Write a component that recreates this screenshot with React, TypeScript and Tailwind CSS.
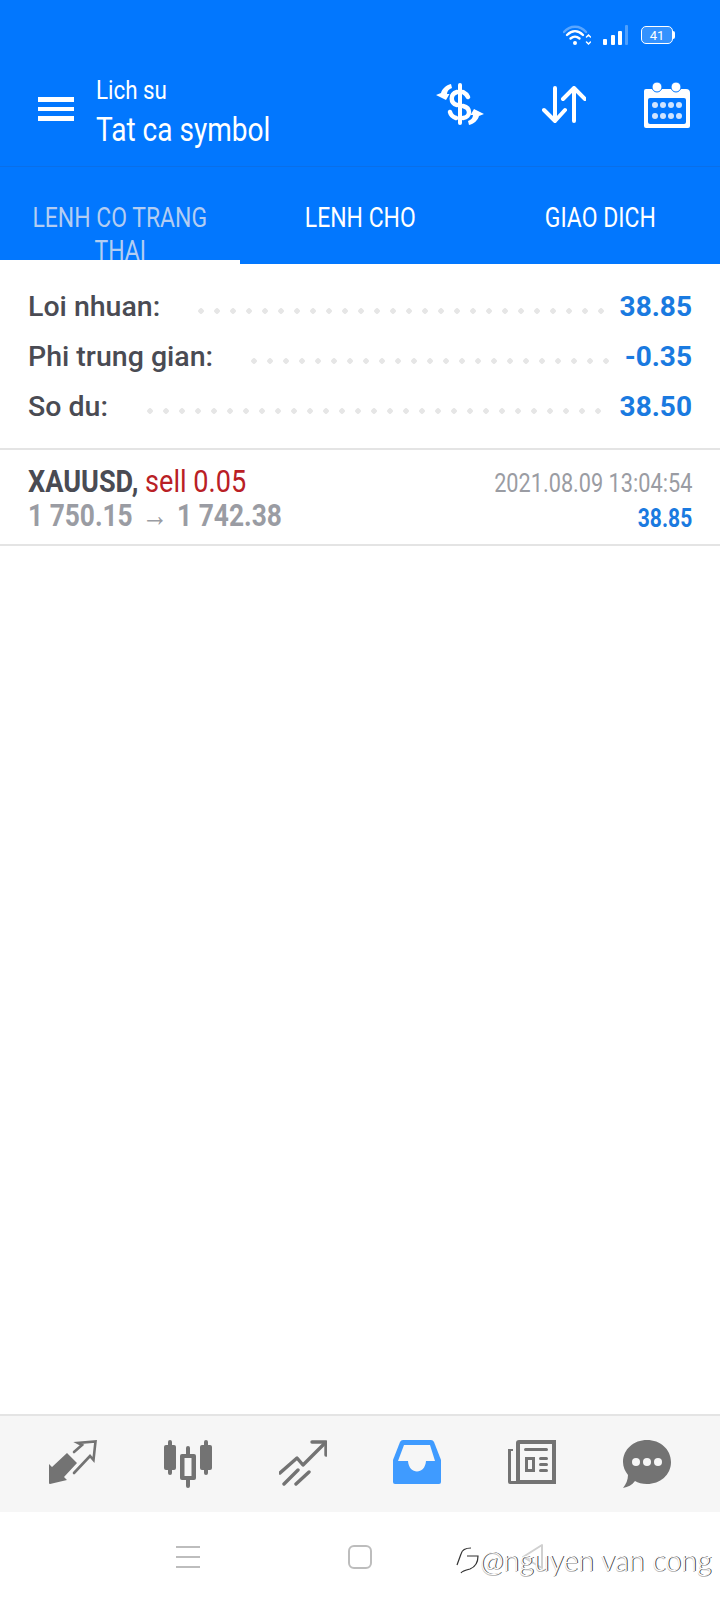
const tabs = [
  { id: "positions", lines: ["LENH CO TRANG", "THAI"], active: true },
  { id: "orders", lines: ["LENH CHO"], active: false },
  { id: "deals", lines: ["GIAO DICH"], active: false },
]

// dots tile is 16px, so the widths here are multiples of 16
const summary = [
  { label: "Loi nhuan:", value: "38.85", labelWidth: "w-[165px]", dotsWidth: "w-[416px]" },
  { label: "Phi trung gian:", value: "-0.35", labelWidth: "w-[218px]", dotsWidth: "w-[368px]" },
  { label: "So du:", value: "38.50", labelWidth: "w-[114px]", dotsWidth: "w-[464px]" },
]

function Condensed({ children, right, center, className = "scale-x-[0.86]" }: { children: React.ReactNode; right?: boolean; center?: boolean; className?: string }) {
  const origin = right ? "origin-right" : center ? "origin-center" : "origin-left"
  return <span className={`inline-block whitespace-nowrap ${origin} ${className}`}>{children}</span>
}

function StatusIcons() {
  return (
    <div className="flex items-center justify-end h-[70px] pr-[45px] gap-[12px]">
      <svg width="28" height="22" viewBox="0 0 28 22" fill="none" strokeLinecap="round">
        <path d="M1 8 C7 1 17 1 23 8" stroke="#ffffff" strokeOpacity="0.35" strokeWidth="2.4" />
        <path d="M4 11 C9 6 15 6 20 11" stroke="#ffffff" strokeWidth="2.4" />
        <path d="M7.5 14.5 C10.5 12 13.5 12 16.5 14.5" stroke="#ffffff" strokeWidth="2.4" />
        <circle cx="12" cy="19" r="2" fill="#ffffff" />
        <path d="M23.5 13 L25.5 11 L27.5 13 M23.5 18 L25.5 20 L27.5 18" stroke="#ffffff" strokeWidth="1.5" />
      </svg>
      <svg width="26" height="21" viewBox="0 0 26 21" fill="#ffffff">
        <rect x="0" y="14" width="4" height="6" rx="1" />
        <rect x="8" y="10" width="4" height="10" rx="1" />
        <rect x="15" y="6" width="4" height="14" rx="1" />
        <rect x="22" y="0" width="3" height="20" rx="1" fillOpacity="0.3" />
      </svg>
      <div className="flex items-center">
        <div className="w-[32px] h-[18px] rounded-[5px] border-[1.5px] border-white bg-white/20 flex items-center justify-center text-white text-[13px] leading-none font-['Roboto',sans-serif]">
          41
        </div>
        <div className="w-[2px] h-[8px] bg-white rounded-r-sm" />
      </div>
    </div>
  )
}

function DollarIcon() {
  const arrow = "M15 1 L16 5 C13 6 11 8 11 11 L13.5 11 L10 17 L0 12 L5 10 C6 6 10 2 15 1 Z"
  return (
    <svg width="48" height="44" viewBox="0 0 48 44" fill="none">
      <path d="M24 2 V40" stroke="#fff" strokeWidth="4" strokeLinecap="round" />
      <path d="M27 9 C29 10 31 12 32 14 M21 9 C14 11 14 20 21 22 M27 23 C35 25 35 34 27 35 M14 29 C15 33 17 34 20 35" stroke="#fff" strokeWidth="4.5" strokeLinecap="round" />
      <path d={arrow} fill="#fff" />
      <path d={arrow} fill="#fff" transform="rotate(180 24 21.5)" />
    </svg>
  )
}

function SortIcon() {
  return (
    <svg width="44" height="38" viewBox="0 0 44 38" fill="none" stroke="#fff" strokeWidth="4" strokeLinecap="round" strokeLinejoin="round">
      <path d="M13 2 V35 M2 24 L13 35 L23 24" />
      <path d="M32 35 V2 M21 13 L32 2 L43 13" />
    </svg>
  )
}

function CalendarIcon() {
  const dots = [0, 1, 2, 3]
  return (
    <svg width="46" height="46" viewBox="0 0 46 46">
      <path d="M2 7 H42 Q46 7 46 11 V44 Q46 46 44 46 H2 Q0 46 0 44 V9 Q0 7 2 7 Z" fill="#fff" />
      <circle cx="13" cy="5" r="5" fill="#fff" stroke="#0277fe" strokeWidth="1" />
      <circle cx="32" cy="5" r="5" fill="#fff" stroke="#0277fe" strokeWidth="1" />
      <rect x="4" y="16" width="38" height="26" rx="2" fill="#0277fe" />
      {dots.map((d) => (
        <g key={d} fill="#cfe4ff">
          <circle cx={11 + d * 8} cy="23" r="3" />
          <circle cx={11 + d * 8} cy="34" r="3" />
        </g>
      ))}
    </svg>
  )
}

function TradeIcon() {
  return (
    <svg width="48" height="46" viewBox="0 0 48 46" fill="#737373">
      <path d="M18 13 L28 23 L15 37 L18 40 L1 44 Q0 44 0 43 L0 24 L3 27 Z" />
      <path d="M25 12 L33 5 L29 3 L46.5 1.5 L44.5 20 L41 16 L25 33" fill="none" stroke="#737373" strokeWidth="2.6" strokeLinecap="round" strokeLinejoin="miter" />
    </svg>
  )
}

function CandlesIcon() {
  return (
    <svg width="48" height="48" viewBox="0 0 48 48" fill="#737373">
      <rect x="0" y="5" width="12" height="25" rx="2" />
      <rect x="4" y="0" width="4" height="35" rx="2" />
      <rect x="36" y="5" width="12" height="25" rx="2" />
      <rect x="40" y="0" width="4" height="35" rx="2" />
      <rect x="22" y="6" width="4" height="42" rx="2" />
      <rect x="16" y="14" width="16" height="26" rx="2" />
      <rect x="20.5" y="18" width="7" height="18" fill="#f6f6f6" />
    </svg>
  )
}

function ChartIcon() {
  return (
    <svg width="48" height="46" viewBox="0 0 48 46" fill="none" stroke="#737373" strokeWidth="3.4" strokeLinecap="round" strokeLinejoin="round">
      <path d="M1 33 L18 18 L24 25 L46 3" />
      <path d="M33 2 H47 V15" />
      <path d="M5 44 L19 30 M17 44 L30 32" />
    </svg>
  )
}

function InboxIcon() {
  return (
    <svg width="48" height="44" viewBox="0 0 48 44">
      <path d="M10 0 H38 Q40 0 41 2 L48 20 V42 Q48 44 46 44 H2 Q0 44 0 42 V20 L7 2 Q8 0 10 0 Z" fill="#3f9bff" />
      <path d="M11 5 H37 L42 21 H33 C32 35 16 35 15 21 H5 Z" fill="#f6f6f6" />
    </svg>
  )
}

function NewsIcon() {
  return (
    <svg width="48" height="44" viewBox="0 0 48 44" fill="#737373">
      <path d="M11 0 H48 V44 H2 Q0 44 0 42 V9 H5 V11 H3 V41 H8 V3 Q8 0 11 0 Z" />
      <rect x="12" y="4" width="32" height="36" fill="#f6f6f6" />
      <rect x="16" y="8" width="24" height="3" rx="1.5" />
      <path d="M17 17 H27 V32 H17 Z M20 20 V29 H24 V20 Z" fillRule="evenodd" />
      <rect x="31" y="17" width="9" height="3" rx="1.5" />
      <rect x="31" y="23" width="9" height="3" rx="1.5" />
      <rect x="31" y="29" width="9" height="3" rx="1.5" />
    </svg>
  )
}

function ChatIcon() {
  return (
    <svg width="48" height="48" viewBox="0 0 48 48">
      <path d="M24 0 C37 0 48 9 48 22 C48 35 37 44 24 44 C19 44 15 43 12 41 C9 45 5 47 0 48 C3 44 5 40 5 35 C2 31 0 27 0 22 C0 9 11 0 24 0 Z" fill="#737373" />
      <circle cx="13" cy="22" r="4" fill="#f6f6f6" />
      <circle cx="24" cy="22" r="4" fill="#f6f6f6" />
      <circle cx="35" cy="22" r="4" fill="#f6f6f6" />
    </svg>
  )
}

export default function App() {
  return (
    <div className="w-[720px] h-[1600px] relative flex flex-col bg-white overflow-hidden font-['Roboto',sans-serif]">
      <div className="bg-[#0277fe] h-[167px] border-b border-[#0a6fe8] shrink-0">
        <StatusIcons />
        <div className="flex items-center pl-[38px] pr-[30px] h-[70px]">
          <div className="flex flex-col gap-[5px] w-[36px] mt-[8px]">
            <div className="h-[4.5px] bg-white" />
            <div className="h-[4.5px] bg-white" />
            <div className="h-[4.5px] bg-white" />
          </div>
          <div className="ml-[22px] text-white w-[220px] mt-[15px]">
            <div className="text-[26px] leading-[34px]"><Condensed>Lich su</Condensed></div>
            <div className="text-[33px] leading-[46px]"><Condensed className="scale-x-[0.85]">Tat ca symbol</Condensed></div>
          </div>
          <div className="ml-auto flex items-center gap-[58px]">
            <DollarIcon />
            <SortIcon />
            <CalendarIcon />
          </div>
        </div>
      </div>

      <div className="bg-[#0277fe] h-[97px] grid grid-cols-3 shrink-0">
        {tabs.map((tab) => (
          <div key={tab.id} className={`relative h-[97px] overflow-hidden pt-[35px] text-center text-[27px] leading-[33px] ${tab.active ? "text-[#b3cdf2]" : "text-white"}`}>
            {tab.lines.map((line) => (
              <div key={line}><Condensed center className="scale-x-[0.85]">{line}</Condensed></div>
            ))}
            {tab.active && <div className="absolute left-0 right-0 bottom-0 h-[4px] bg-white" />}
          </div>
        ))}
      </div>

      <div className="pl-[28px] pr-[28px] pt-[18px] h-[186px] border-b-2 border-[#e4e4e4] shrink-0">
        {summary.map((row) => (
          <div key={row.label} className="flex items-center h-[50px]">
            <div className={`${row.labelWidth} shrink-0 text-[28.5px] font-medium text-[#4a4b53] whitespace-nowrap`}>{row.label}</div>
            <div className={`${row.dotsWidth} shrink-0 h-[6px] mt-[8px] bg-[radial-gradient(circle,#e6e6e6_2.5px,transparent_3px)] bg-[length:16px_6px] bg-repeat-x`} />
            <div className="flex-1 text-right text-[28px] font-bold text-[#1a7ae0]">{row.value}</div>
          </div>
        ))}
      </div>

      <div className="h-[96px] border-b-2 border-[#e4e4e4] pl-[28px] pr-[28px] pt-[14px] flex justify-between shrink-0">
        <div>
          <div className="text-[31.5px] leading-[36px]">
            <Condensed>
              <span className="font-bold text-[#4a4b53]">XAUUSD,</span> <span className="text-[#b92025]">sell 0.05</span>
            </Condensed>
          </div>
          <div className="text-[31.5px] leading-[32px] font-bold text-[#9a9ca3]">
            <Condensed className="scale-x-[0.835]">1 750.15 <span className="font-normal mx-[3px]">→</span> 1 742.38</Condensed>
          </div>
        </div>
        <div className="text-right pt-[2px]">
          <div className="text-[26px] leading-[34px] text-[#9a9ca3]"><Condensed right className="scale-x-[0.835]">2021.08.09 13:04:54</Condensed></div>
          <div className="text-[26px] leading-[32px] mt-[2px] font-bold text-[#1a7ae0]"><Condensed right className="scale-x-[0.81]">38.85</Condensed></div>
        </div>
      </div>

      <div className="flex-1" />

      <div className="h-[98px] border-t-2 border-[#e4e4e4] bg-[#f6f6f6] flex items-start justify-between px-[49px] pt-[24px] shrink-0">
        <TradeIcon />
        <CandlesIcon />
        <ChartIcon />
        <InboxIcon />
        <NewsIcon />
        <ChatIcon />
      </div>

      <div className="h-[88px] flex items-start pt-[33px] pl-[176px] shrink-0">
        <div className="flex flex-col gap-[8px] w-[24px] pt-[1px]">
          <div className="h-[2px] bg-[#bdbdbd]" />
          <div className="h-[2px] bg-[#bdbdbd]" />
          <div className="h-[2px] bg-[#bdbdbd]" />
        </div>
        <div className="ml-[148px] w-[24px] h-[24px] rounded-[6px] border-2 border-[#bdbdbd]" />
        <svg className="ml-[148px] -mt-[2px]" width="24" height="28" viewBox="0 0 24 28" fill="none" stroke="#d0d0d0" strokeWidth="2" strokeLinejoin="round">
          <path d="M22 2 V25 L3 14 Z" />
        </svg>
      </div>

      <div className="absolute left-[456px] top-[1545px] flex items-center gap-[1px] text-[28.5px] leading-none font-light text-white whitespace-nowrap font-['Lato',sans-serif] [text-shadow:1px_0_0_#444,0_1px_0_#bbb]">
        <svg width="23" height="30" viewBox="0 0 23 30" fill="none" stroke="#333" strokeWidth="1.2">
          <path d="M15 3 C9 3 6 5 5 9 L1 20 M11 11 H22 C22 18 19 22 14 24 C10 25 6 26 5 28" />
        </svg>
        <span>@nguyen van cong</span>
      </div>
    </div>
  )
}
